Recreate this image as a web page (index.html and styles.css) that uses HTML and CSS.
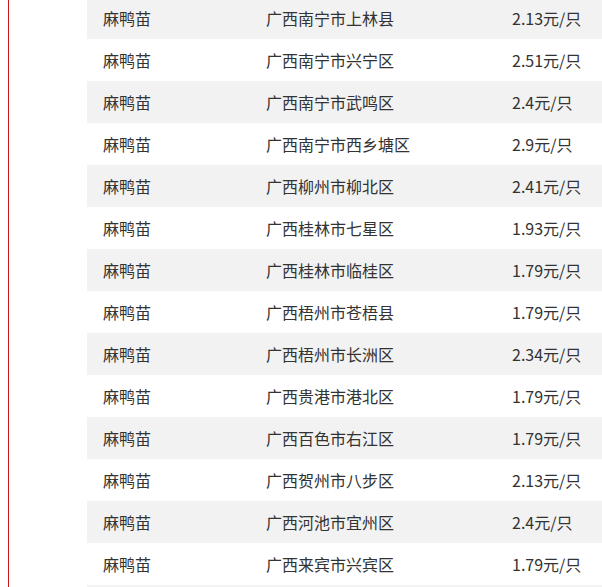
FILE: index.html
```html
<!DOCTYPE html>
<html lang="zh-CN">
<head>
  <meta charset="UTF-8">
  <meta name="viewport" content="width=device-width, initial-scale=1.0">
  <title>麻鸭苗价格</title>
  <link rel="stylesheet" href="styles.css">
</head>
<body>
  <div class="article">
    <!-- 价格表 -->
    <table class="price-table">
      <colgroup>
        <col class="col-name">
        <col class="col-area">
        <col class="col-price">
      </colgroup>
      <tbody>
        <tr><td>麻鸭苗</td><td>广西南宁市上林县</td><td>2.13元/只</td></tr>
        <tr><td>麻鸭苗</td><td>广西南宁市兴宁区</td><td>2.51元/只</td></tr>
        <tr><td>麻鸭苗</td><td>广西南宁市武鸣区</td><td>2.4元/只</td></tr>
        <tr><td>麻鸭苗</td><td>广西南宁市西乡塘区</td><td>2.9元/只</td></tr>
        <tr><td>麻鸭苗</td><td>广西柳州市柳北区</td><td>2.41元/只</td></tr>
        <tr><td>麻鸭苗</td><td>广西桂林市七星区</td><td>1.93元/只</td></tr>
        <tr><td>麻鸭苗</td><td>广西桂林市临桂区</td><td>1.79元/只</td></tr>
        <tr><td>麻鸭苗</td><td>广西梧州市苍梧县</td><td>1.79元/只</td></tr>
        <tr><td>麻鸭苗</td><td>广西梧州市长洲区</td><td>2.34元/只</td></tr>
        <tr><td>麻鸭苗</td><td>广西贵港市港北区</td><td>1.79元/只</td></tr>
        <tr><td>麻鸭苗</td><td>广西百色市右江区</td><td>1.79元/只</td></tr>
        <tr><td>麻鸭苗</td><td>广西贺州市八步区</td><td>2.13元/只</td></tr>
        <tr><td>麻鸭苗</td><td>广西河池市宜州区</td><td>2.4元/只</td></tr>
        <tr><td>麻鸭苗</td><td>广西来宾市兴宾区</td><td>1.79元/只</td></tr>
        <tr><td></td><td></td><td></td></tr>
      </tbody>
    </table>
  </div>
</body>
</html>
```

FILE: styles.css
```css
/* Reset base */
* {
  box-sizing: border-box;
  margin: 0;
  padding: 0;
}
html, body {
  height: 100%;
  overflow: hidden;
}
body {
  font-family: "Noto Sans CJK SC", "Microsoft YaHei", sans-serif;
  font-size: 16px;
  color: #333;
  background: #fff;
}
/* Colonna articolo con bordo rosso a sinistra */
.article {
  margin-left: 8px;
  min-height: 100%;
  border-left: 1px solid #c8161d;
  padding-left: 78px;
}
/* Tabella prezzi */
.price-table {
  width: 100%;
  margin-top: -3px;
  border-collapse: collapse;
  table-layout: fixed;
}
.col-name  { width: 163px; }
.col-area  { width: 246px; }
.price-table td {
  height: 42px;
  padding: 0 16px;
  vertical-align: middle;
  white-space: nowrap;
}
.price-table tr:nth-child(odd) {
  background: #f2f2f2;
}
```
